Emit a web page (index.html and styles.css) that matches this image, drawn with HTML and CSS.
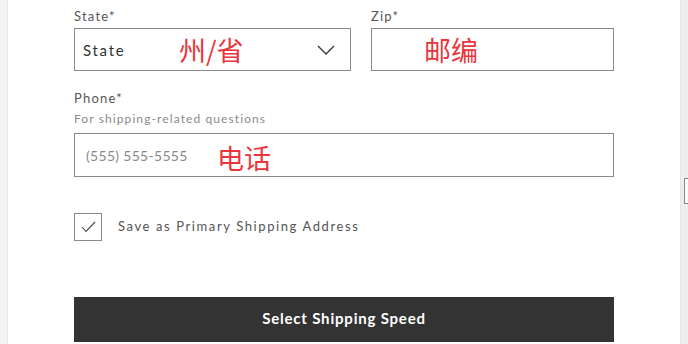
FILE: index.html
```html
<!DOCTYPE html>
<html>
<head>
<meta charset="utf-8">
<link rel="stylesheet" href="styles.css">
</head>
<body>
<div class="page">
  <div class="gutter-left"></div>
  <main class="panel">
    <div class="row">
      <div class="field state">
        <div class="label">State*</div>
        <div class="box select">
          <span class="value">State</span>
          <svg class="chev" width="18" height="10" viewBox="0 0 18 10"><polyline points="1,1 9,9 17,1" fill="none" stroke="#333" stroke-width="1.3"/></svg>
          <span class="note note-state">州/省</span>
        </div>
      </div>
      <div class="field zip">
        <div class="label">Zip*</div>
        <div class="box">
          <span class="note note-zip">邮编</span>
        </div>
      </div>
    </div>
    <div class="field phone">
      <div class="label">Phone*</div>
      <div class="hint">For shipping-related questions</div>
      <div class="box tall">
        <span class="placeholder">(555) 555-5555</span>
        <span class="note note-phone">电话</span>
      </div>
    </div>
    <label class="check">
      <span class="checkbox"><svg width="15" height="12" viewBox="0 0 15 12"><polyline points="1,6 5,10.5 14,1" fill="none" stroke="#444" stroke-width="1.1"/></svg></span>
      <span class="check-text">Save as Primary Shipping Address</span>
    </label>
    <button class="submit">Select Shipping Speed</button>
  </main>
  <div class="gutter-right"><span class="grip"></span></div>
</div>
</body>
</html>
```

FILE: styles.css
```css
html, body {
  margin: 0;
  padding: 0;
  background: #ffffff;
  font-family: "Lato", "Open Sans", sans-serif;
}
.page {
  display: flex;
  width: 688px;
  height: 344px;
  overflow: hidden;
}
.gutter-left {
  width: 7px;
  background: #f3f3f3;
  border-right: 1px solid #e4e4e4;
  flex: none;
}
.gutter-right {
  width: 7px;
  background: #eeeeee;
  border-left: 1px solid #e6e6e6;
  flex: none;
  display: flex;
  flex-direction: column;
  align-items: flex-end;
  padding-top: 178px;
}
.grip {
  display: block;
  width: 3px;
  height: 24px;
  border: 1px solid #888;
  border-right: none;
  background: #fafafa;
}
.panel {
  flex: 1;
  padding: 8px 66px 0 66px;
  box-sizing: border-box;
  display: flex;
  flex-direction: column;
}
.row {
  display: flex;
  gap: 20px;
}
.state { width: 277px; }
.zip { width: 243px; }
.label {
  font-size: 13px;
  line-height: 16px;
  color: #555;
  letter-spacing: 1.2px;
  margin-bottom: 4px;
}
.hint {
  font-size: 12px;
  line-height: 16px;
  color: #8a8a8a;
  letter-spacing: 1.1px;
  margin-top: 5px;
  margin-bottom: 6px;
}
.box {
  position: relative;
  height: 43px;
  border: 1px solid #8a8a8a;
  box-sizing: border-box;
  display: flex;
  align-items: center;
  padding: 0 15px 0 8px;
  background: #fff;
}
.box.tall { height: 44px; padding-left: 11px; }
.select { justify-content: space-between; }
.value {
  font-size: 15px;
  color: #333;
  letter-spacing: 1.7px;
}
.placeholder {
  font-size: 14px;
  color: #8a8a8a;
  letter-spacing: 0.3px;
}
.chev { display: block; }
.note {
  position: absolute;
  top: 4px;
  font-family: "Noto Sans CJK SC", sans-serif;
  font-size: 27px;
  line-height: 34px;
  color: #e8363c;
}
.note-state { left: 104px; }
.note-zip { left: 52px; }
.note-phone { left: 142px; top: 7px; }
.phone { margin-top: 19px; }
.check {
  display: flex;
  align-items: center;
  margin-top: 36px;
  gap: 16px;
}
.checkbox {
  width: 28px;
  height: 28px;
  border: 1px solid #8a8a8a;
  box-sizing: border-box;
  display: flex;
  align-items: center;
  justify-content: center;
}
.checkbox svg { display: block; }
.check-text {
  font-size: 13px;
  color: #555;
  letter-spacing: 1.6px;
  margin-top: -2px;
}
.submit {
  margin-top: 56px;
  height: 45px;
  border: none;
  background: #333333;
  color: #ffffff;
  font-family: "Lato", sans-serif;
  font-weight: 700;
  font-size: 15px;
  letter-spacing: 0.8px;
  width: 100%;
  padding: 0 0 4px 0;
}
```
